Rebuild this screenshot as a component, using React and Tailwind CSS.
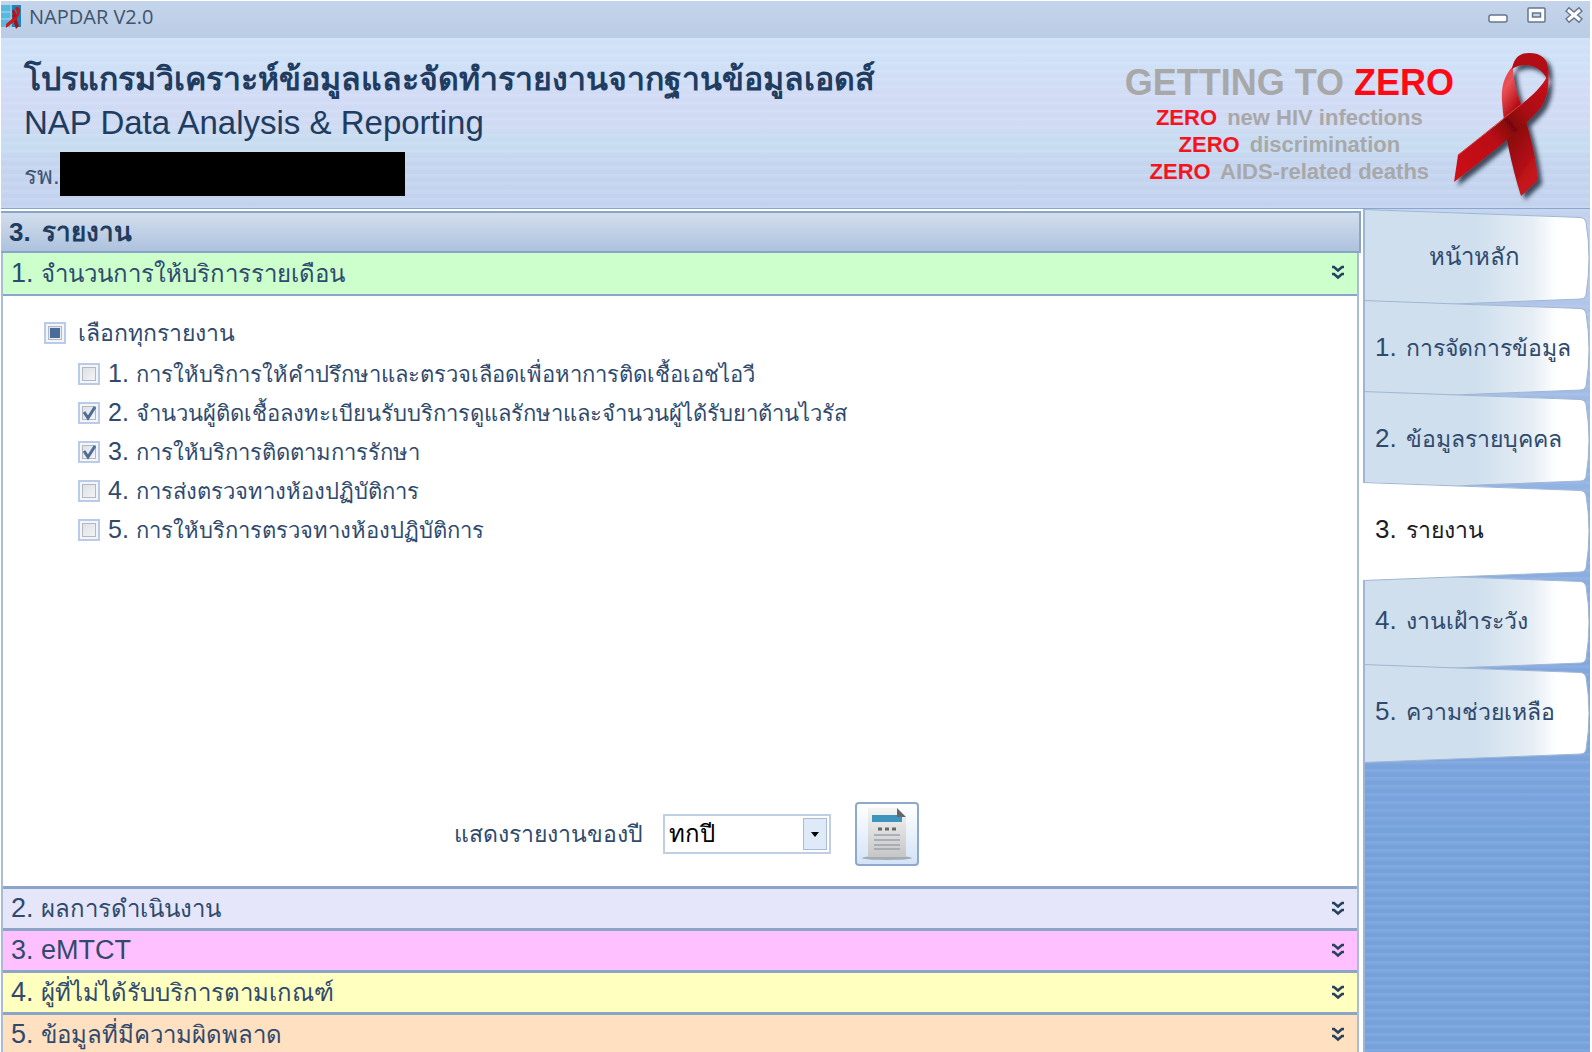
import { useEffect, useRef, useState } from "react";

const RIBBON_TABS = [
  { id: "home", label: "หน้าหลัก" },
  { id: "data", number: "1.", label: "การจัดการข้อมูล" },
  { id: "person", number: "2.", label: "ข้อมูลรายบุคคล" },
  { id: "report", number: "3.", label: "รายงาน" },
  { id: "watch", number: "4.", label: "งานเฝ้าระวัง" },
  { id: "help", number: "5.", label: "ความช่วยเหลือ" },
];

const REPORTS = [
  "การให้บริการให้คำปรึกษาและตรวจเลือดเพื่อหาการติดเชื้อเอชไอวี",
  "จำนวนผู้ติดเชื้อลงทะเบียนรับบริการดูแลรักษาและจำนวนผู้ได้รับยาต้านไวรัส",
  "การให้บริการติดตามการรักษา",
  "การส่งตรวจทางห้องปฏิบัติการ",
  "การให้บริการตรวจทางห้องปฏิบัติการ",
];

const SLOGANS = ["new HIV infections", "discrimination", "AIDS-related deaths"];

function Ribbon({ className }) {
  return (
    <svg viewBox="0 0 100 148" className={className} aria-hidden="true">
      <defs>
        <linearGradient id="rb-a" x1="0" y1="1" x2="1" y2="0">
          <stop offset="0" stopColor="#cf1219" />
          <stop offset="0.4" stopColor="#b90d14" />
          <stop offset="0.55" stopColor="#7e060b" />
          <stop offset="0.68" stopColor="#a80c12" />
          <stop offset="1" stopColor="#cf141b" />
        </linearGradient>
        <linearGradient id="rb-b" x1="0" y1="0" x2="0.4" y2="1">
          <stop offset="0" stopColor="#e2383e" />
          <stop offset="0.18" stopColor="#ea5257" />
          <stop offset="0.4" stopColor="#b80f16" />
          <stop offset="0.55" stopColor="#8a080d" />
          <stop offset="1" stopColor="#c4141a" />
        </linearGradient>
        <filter id="rb-s" x="-20%" y="-20%" width="150%" height="150%">
          <feDropShadow dx="4" dy="4" stdDeviation="2" floodColor="#1d2838" floodOpacity="0.8" />
        </filter>
      </defs>
      <g filter="url(#rb-s)">
        <path d="M59 14C50 24 47 35 48 49C50 78 57 112 67 144L84 128C82 104 75 78 67 52C62 38 59 27 59 14Z" fill="url(#rb-b)" />
        <path d="M58 17C60 5 66 1 75 1C87 1 94 7 94 17C95 21 94 24 93 27C88 15 71 8 58 17Z" fill="#b30c13" />
        <path d="M94 15C95 32 95 42 88 54C78 68 42 98 0 130L4 103C26 86 60 59 69 51C79 43 88 34 93 25Z" fill="url(#rb-a)" />
        <path d="M69 51C56 61 27 85 4 103" fill="none" stroke="#d8454a" strokeWidth="1" />
      </g>
    </svg>
  );
}

function AppIcon() {
  return (
    <svg viewBox="0 0 20 26" className="h-[26px] w-5" aria-hidden="true">
      <rect x="0" y="2" width="20" height="22" fill="#1d86b8" />
      <rect x="0" y="2" width="11" height="22" fill="#5ab8de" />
      <path d="M0 9H10M0 16H10M10 2V24" stroke="#a5dcf0" strokeWidth="1" />
      <path d="M11 12L14 11L18 23L15 26L13 20Z" fill="#a3131a" />
      <path d="M14 5C15 3 20 4 19 9C18 15 12 20 5 25V21C10 17 15 13 16 9Z" fill="#d2161d" />
      <path d="M13 6L11 8L13 15L16 13Z" fill="#b3131a" />
    </svg>
  );
}

function WindowButton({ label, children }) {
  return (
    <button type="button" aria-label={label} className="h-5 w-5">
      <svg viewBox="0 0 20 20" className="size-5" fill="none" aria-hidden="true">
        {children}
      </svg>
    </button>
  );
}

function Chevrons() {
  return (
    <svg viewBox="0 0 14 16" className="h-4 w-3.5" fill="none" stroke="#27425f" strokeWidth="2.500" aria-hidden="true">
      <path d="M1 2H3L7 5.500L11 2H13M1 9H3L7 12.500L11 9H13" />
    </svg>
  );
}

function CheckBox({ id, number, label, mixed, checked, onChange, className }) {
  const ref = useRef(null);
  useEffect(() => {
    ref.current.indeterminate = Boolean(mixed);
  }, [mixed]);
  return (
    <div className="flex items-center">
      <span className="relative size-[22px] shrink-0">
        <input
          ref={ref}
          id={id}
          type="checkbox"
          checked={checked}
          onChange={onChange}
          className="block size-[22px] appearance-none border-2 border-[#b9cbe7] bg-linear-to-br from-[#d8dce2] to-[#f8f8f8] shadow-[inset_0_0_0_2px_#f3f5f8,inset_0_0_0_3px_#b4b9c0]"
        />
        <svg viewBox="0 0 22 22" className="pointer-events-none absolute inset-0 size-[22px]" aria-hidden="true">
          {mixed && <rect x="6" y="6" width="10" height="10" fill="#466d9b" />}
          {checked && !mixed && <path d="M6 10L10 16L17 5" fill="none" stroke="#4b6d98" strokeWidth="3" />}
        </svg>
      </span>
      <label htmlFor={id} className={className}>
        {number ? (
          <>
            {number} <span className="text-[22px] leading-none">{label}</span>
          </>
        ) : (
          label
        )}
      </label>
    </div>
  );
}

function SectionHeader({ number, label, latin, className }) {
  return (
    <h2>
      <button type="button" className={`flex w-full justify-between pr-3 pl-2 text-left text-[27px] ${className}`}>
        <span>
          {number} <span className={latin ? "text-[27px] leading-none" : "text-2xl leading-none"}>{label}</span>
        </span>
        <span className="flex h-[39px] items-center">
          <Chevrons />
        </span>
      </button>
    </h2>
  );
}

function SideTab({ number, label, active, onClick }) {
  return (
    <button
      type="button"
      role="tab"
      aria-selected={active}
      onClick={onClick}
      className={`relative h-[91px] w-full pt-1 whitespace-nowrap ${active ? "z-10 text-[#1c1c24]" : "text-[#2f4a6d]"} ${
        number ? "pl-3 text-left text-[23px]" : "pr-1 text-center text-2xl"
      }`}
    >
      <svg viewBox="0 0 227 99" preserveAspectRatio="none" className="absolute top-0 left-0 h-[99px] w-full" aria-hidden="true">
        <defs>
          <linearGradient id="tab-fill">
            <stop offset="0" stopColor="#cfdfee" />
            <stop offset="0.5" stopColor="#cfdfee" />
            <stop offset="0.75" stopColor="#e6eef5" />
            <stop offset="0.86" stopColor="#fff" />
          </linearGradient>
        </defs>
        <path
          d="M0 0L218 8.500Q222 9 223 13Q229 49 223 86Q222 90 218 90L0 98.500Z"
          fill={active ? "#fff" : "url(#tab-fill)"}
        />
        <path
          d="M0 0.500L218 8.500Q222 9 223 13Q229 49 223 86Q222 90 218 90L0 98.500"
          fill="none"
          stroke="#9fb6d2"
        />
        {!active && <path d="M1 0V98" stroke="#9fb6d2" strokeWidth="2" />}
      </svg>
      <span className="relative">
        {number && <span className="mr-0.5 text-[26px]">{number} </span>}
        {label}
      </span>
    </button>
  );
}

export default function App() {
  const [tab, setTab] = useState("report");
  const [picked, setPicked] = useState([false, true, true, false, false]);
  const all = picked.every(Boolean);
  const some = picked.some(Boolean);

  return (
    <div className="flex min-h-screen flex-col border-t border-r-2 border-l border-white bg-[linear-gradient(#cfe0f7_37px,#cfe1f7_60px,#d1dbf5_95px,#cfdaf3_125px,#c7dcf1_137px,#c7dcf1_148px,#c5d5ef_160px,#c3d3ef_207px,#a9c0e6_340px,#92b3e4_480px,#7fa5de_700px,#76a2dc_830px,#76a2dc)] font-['Liberation_Sans',sans-serif] text-[#2f4a6d]">
      <header className="flex h-[37px] justify-between bg-linear-to-b from-[#c4d4eb] to-[#bacde4] pr-1.5">
        <div className="flex gap-2 pt-0.5">
          <AppIcon />
          <h1 className="font-['Open_Sans',sans-serif] text-xl text-[#40546f]">NAPDAR V2.0</h1>
        </div>
        <div className="flex gap-[18px] pt-1">
          <WindowButton label="Minimize">
            <rect x="1" y="10" width="18" height="7" rx="2" fill="#fff" stroke="#66758e" strokeWidth="1.500" />
          </WindowButton>
          <WindowButton label="Maximize">
            <rect x="2" y="3" width="17" height="14" rx="1" fill="#fff" stroke="#66758e" strokeWidth="1.500" />
            <rect x="6.500" y="8" width="8" height="4" fill="#c4d4eb" stroke="#66758e" strokeWidth="1.500" />
          </WindowButton>
          <WindowButton label="Close">
            <path d="M3 4L17 16M17 4L3 16" stroke="#66758e" strokeWidth="6" />
            <path d="M4 5L16 15M16 5L4 15" stroke="#fff" strokeWidth="3" />
          </WindowButton>
        </div>
      </header>

      <div className="flex h-[170px] justify-between bg-[repeating-linear-gradient(#ffffff1a_0_1px,#ffffff00_4px_8px)] pr-9 pl-[23px]">
        <div className="pt-4 text-[#203c60]">
          <p className="text-[32px] leading-[50px] font-bold">โปรแกรมวิเคราะห์ข้อมูลและจัดทำรายงานจากฐานข้อมูลเอดส์</p>
          <p className="text-[33px] leading-[38px]">NAP Data Analysis &amp; Reporting</p>
          <p className="flex pt-2.5 text-2xl leading-[48px] text-[#40546f]">
            รพ.
            <span className="h-11 w-[345px] bg-black" />
          </p>
        </div>
        <div className="flex pt-3.5 font-bold">
          <div className="pt-2.5 text-center text-[#a8a8a8]">
            <p className="text-4xl leading-[42px]">
              GETTING TO <span className="text-[#ff0a14]">ZERO</span>
            </p>
            {SLOGANS.map((s) => (
              <p key={s} className="text-[22px] leading-[27px]">
                <span className="mr-1 text-[#f5141e]">ZERO</span> {s}
              </p>
            ))}
          </div>
          <Ribbon className="h-[148px] w-[100px] overflow-visible" />
        </div>
      </div>

      <div className="flex grow border-t border-[#8ba6cd]">
        <main className="flex grow flex-col bg-white pt-0.5 pr-1">
          <h2 className="-mr-0.5 border-t-2 border-r-2 border-b-2 border-[#8ba5c8] bg-linear-to-b from-[#d2deed] to-[#aec2de] pl-2 text-[26px] leading-[38px] font-bold text-[#203c60]">
            <span className="mr-1">3. </span>รายงาน
          </h2>
          <div className="flex grow flex-col border-x-2 border-[#a9bcd6]">
            <SectionHeader
              number="1."
              label="จำนวนการให้บริการรายเดือน"
              className="border-b-2 border-[#8ba6cd] bg-[#ccffcc] leading-[41px]"
            />
            <section className="flex grow flex-col justify-between bg-white">
              <div className="pt-4 pl-[41px]">
                <CheckBox
                  id="all"
                  label="เลือกทุกรายงาน"
                  mixed={some && !all}
                  checked={all}
                  onChange={() => setPicked(picked.map(() => !all))}
                  className="pl-3 text-[23px] leading-[42px]"
                />
                <div className="pl-[34px]">
                  {REPORTS.map((r, i) => (
                    <CheckBox
                      key={r}
                      id={`r${i}`}
                      number={`${i + 1}.`}
                      label={r}
                      checked={picked[i]}
                      onChange={() => setPicked(picked.map((v, j) => (j === i ? !v : v)))}
                      className="pl-2 text-[25px] leading-[39px]"
                    />
                  ))}
                </div>
              </div>
              <div className="flex items-center justify-center pb-5 pl-3">
                <label htmlFor="year" className="text-[23px]">
                  แสดงรายงานของปี
                </label>
                <span className="relative ml-5 h-10 w-[168px] border-2 border-[#c0cfe4] bg-white">
                  <select id="year" className="h-full w-full appearance-none pl-1 text-2xl text-black outline-none">
                    <option>ทกปี</option>
                  </select>
                  <span className="pointer-events-none absolute top-0.5 right-0.5 flex h-8 w-6 items-center justify-center border border-[#a9bcd8] bg-[#deeaf7]">
                    <svg viewBox="0 0 8 5" className="h-[5px] w-2" aria-hidden="true">
                      <path d="M0 0H8L4 5Z" fill="#000" />
                    </svg>
                  </span>
                </span>
                <button type="button" aria-label="Show report" className="ml-6 flex size-16 items-center justify-center rounded border-2 border-[#8fa9cb] bg-linear-to-b from-white to-[#d3e3f7]">
                  <svg viewBox="0 0 56 56" className="size-14" aria-hidden="true">
                    <defs>
                      <linearGradient id="doc" x2="0" y2="1">
                        <stop offset="0" stopColor="#f4f4f4" />
                        <stop offset="1" stopColor="#c6c6c6" />
                      </linearGradient>
                    </defs>
                    <ellipse cx="28" cy="52" rx="25" ry="2" fill="#a3abb5" />
                    <path d="M9 2H38L47 11V51H9Z" fill="url(#doc)" />
                    <path d="M13 9H43V16H13Z" fill="#3f94bd" />
                    <path d="M38 2L47 11H38Z" fill="#666" />
                    <path d="M19 23H23M26 23H30M33 23H37" stroke="#666" strokeWidth="3" />
                    <path d="M15 29H41M15 34H41M15 39H41M15 43H41" stroke="#96a4ac" strokeWidth="1.500" />
                  </svg>
                </button>
              </div>
            </section>
            <SectionHeader number="2." label="ผลการดำเนินงาน" className="border-t-3 border-[#8ba5c8] bg-[#e6e6fa] leading-[39px]" />
            <SectionHeader number="3." label="eMTCT" latin className="border-t-3 border-[#8ba5c8] bg-[#ffc0ff] leading-[39px]" />
            <SectionHeader number="4." label="ผู้ที่ไม่ได้รับบริการตามเกณฑ์" className="border-t-3 border-[#8ba5c8] bg-[#ffffc0] leading-[39px]" />
            <SectionHeader number="5." label="ข้อมูลที่มีความผิดพลาด" className="h-10 border-t-3 border-[#8ba5c8] bg-[#ffe0c0] leading-[39px]" />
          </div>
        </main>
        <nav
          role="tablist"
          aria-orientation="vertical"
          className="w-[227px] shrink-0 bg-[repeating-linear-gradient(#ffffff12_0_2px,#ffffff00_4px_8px)] shadow-[inset_2px_0_0_#9fb6d2]"
        >
          {RIBBON_TABS.map((t) => (
            <SideTab key={t.id} number={t.number} label={t.label} active={t.id === tab} onClick={() => setTab(t.id)} />
          ))}
        </nav>
      </div>
    </div>
  );
}
